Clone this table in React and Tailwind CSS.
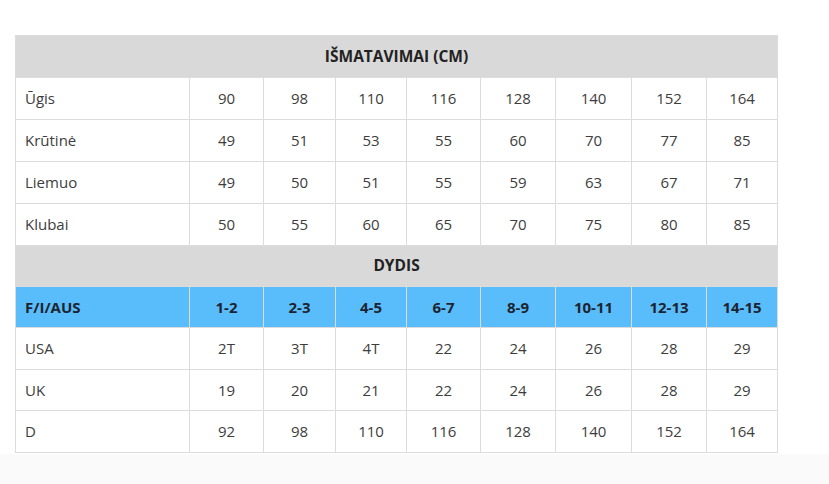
import React from "react";

const widths = [174, 74, 72, 71, 74, 75, 76, 75, 71];

const measRows = [
  ["Ūgis", "90", "98", "110", "116", "128", "140", "152", "164"],
  ["Krūtinė", "49", "51", "53", "55", "60", "70", "77", "85"],
  ["Liemuo", "49", "50", "51", "55", "59", "63", "67", "71"],
  ["Klubai", "50", "55", "60", "65", "70", "75", "80", "85"],
];

const sizeHead = ["F/I/AUS", "1-2", "2-3", "4-5", "6-7", "8-9", "10-11", "12-13", "14-15"];

const sizeRows = [
  ["USA", "2T", "3T", "4T", "22", "24", "26", "28", "29"],
  ["UK", "19", "20", "21", "22", "24", "26", "28", "29"],
  ["D", "92", "98", "110", "116", "128", "140", "152", "164"],
];

function Row({ cells, blue, h }) {
  return (
    <tr className={(h || "h-[42px]") + (blue ? " bg-[#5abdfb]" : " bg-white")}>
      {cells.map((c, i) => (
        <td
          key={i}
          className={
            "border border-[#dcdcdc] p-0 " +
            (i === 0 ? "pl-[9px] text-left " : "text-center ") +
            (blue ? "font-bold text-[#1c2430]" : "text-[#3d3d3d]")
          }
        >
          {c}
        </td>
      ))}
    </tr>
  );
}

function Header({ text, h }) {
  return (
    <tr className={h}>
      <td
        colSpan={9}
        className="border border-[#dcdcdc] bg-[#d9d9d9] p-0 text-center text-[15.5px] font-bold text-[#222]"
      >
        {text}
      </td>
    </tr>
  );
}

export default function App() {
  return (
    <div
      className="relative h-[484px] w-[829px] overflow-hidden bg-white"
      style={{ fontFamily: '"Open Sans", "Liberation Sans", sans-serif' }}
    >
      <div className="pl-[15px] pt-[35px]">
        <table className="table-fixed border-collapse text-[15px] leading-none w-[763px]">
          <colgroup>
            {widths.map((w, i) => (
              <col key={i} style={{ width: w }} />
            ))}
          </colgroup>
          <tbody>
            <Header text="IŠMATAVIMAI (CM)" h="h-[42px]" />
            {measRows.map((r, i) => (
              <Row key={i} cells={r} />
            ))}
            <Header text="DYDIS" h="h-[41px]" />
            <Row cells={sizeHead} blue h="h-[41px]" />
            <Row cells={sizeRows[0]} />
            <Row cells={sizeRows[1]} h="h-[41px]" />
            <Row cells={sizeRows[2]} />
          </tbody>
        </table>
      </div>
      <div className="absolute bottom-0 left-0 right-0 h-[30px] bg-[#fafafa]" />
    </div>
  );
}
